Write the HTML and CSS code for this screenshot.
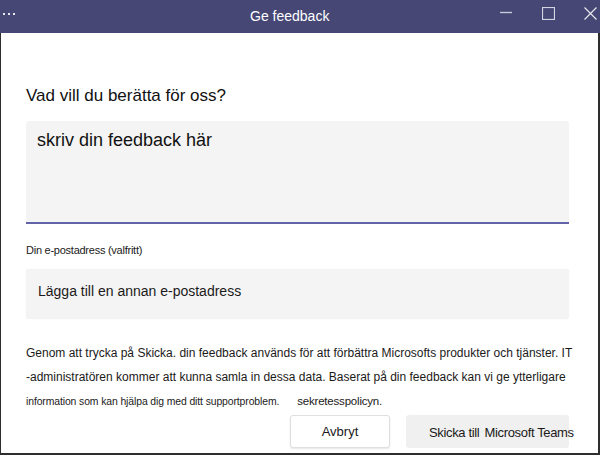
FILE: index.html
```html
<!DOCTYPE html>
<html lang="sv">
<head>
<meta charset="utf-8">
<title>Ge feedback</title>
<link rel="stylesheet" href="styles.css">
</head>
<body>
<div class="window">
  <header class="titlebar">
    <div class="dots"><span></span><span></span><span></span></div>
    <div class="title">Ge feedback</div>
    <div class="controls">
      <svg class="ctl" width="13" height="13" viewBox="0 0 13 13"><line x1="0" y1="5.5" x2="12" y2="5.5" stroke="#c9c9d9" stroke-width="1.4"/></svg>
      <svg class="ctl" width="13" height="13" viewBox="0 0 13 13"><rect x="0.5" y="0.5" width="12" height="12" fill="none" stroke="#d4d4e2" stroke-width="1.2"/></svg>
      <svg class="ctl" width="13" height="13" viewBox="0 0 13 13"><path d="M0.5 0.5 L12.5 12.5 M12.5 0.5 L0.5 12.5" stroke="#e6e6ee" stroke-width="1.2" fill="none"/></svg>
    </div>
  </header>
  <main class="content">
    <h1 class="heading">Vad vill du berätta för oss?</h1>
    <div class="textarea">skriv din feedback här</div>
    <label class="label">Din e-postadress (valfritt)</label>
    <div class="input">Lägga till en annan e-postadress</div>
    <p class="notice">Genom att trycka på Skicka. din feedback används för att förbättra Microsofts produkter och tjänster. IT -administratören kommer att kunna samla in dessa data. Baserat på din feedback kan vi ge ytterligare <span class="small">information som kan hjälpa dig med ditt supportproblem.</span><span class="policy">sekretesspolicyn.</span></p>
    <div class="actions">
      <button class="btn cancel">Avbryt</button>
      <button class="btn send">Skicka till <span class="teams">Microsoft Teams</span></button>
    </div>
  </main>
</div>
</body>
</html>
```

FILE: styles.css
```css
* { box-sizing: border-box; }
html, body { margin: 0; padding: 0; background: #ffffff; }
body { font-family: "Liberation Sans", Arial, sans-serif; color: #1b1a19; }

.window {
  width: 600px;
  height: 455px;
  display: flex;
  flex-direction: column;
  overflow: hidden;
}

.titlebar {
  height: 33px;
  flex: none;
  background: #464775;
  display: flex;
  align-items: flex-start;
  color: #ffffff;
}
.dots {
  display: flex;
  gap: 3px;
  padding-left: 3px;
  margin-top: 13px;
}
.dots span {
  width: 2px;
  height: 2px;
  background: #e8e8f0;
}
.title {
  margin-left: 235px;
  margin-top: 8px;
  font-size: 14px;
  line-height: 17px;
  color: #ffffff;
}
.controls {
  margin-left: auto;
  margin-right: 3px;
  margin-top: 7px;
  display: flex;
  gap: 29px;
}
.ctl { display: block; }

.content {
  flex: 1;
  border-left: 1px solid #2e2e2e;
  border-right: 2px solid #2e2e2e;
  border-bottom: 2px solid #2e2e2e;
  padding: 52px 29px 0 25px;
  display: flex;
  flex-direction: column;
}

.heading {
  margin: 0;
  font-size: 17px;
  line-height: 21px;
  font-weight: normal;
  color: #111111;
}
.textarea {
  margin-top: 15px;
  height: 103px;
  background: #f4f4f4;
  border-radius: 3px 3px 0 0;
  border-bottom: 2px solid #6264a7;
  padding: 8px 11px;
  font-size: 18px;
  line-height: 22px;
  color: #111111;
}
.label {
  margin-top: 19px;
  font-size: 11px;
  line-height: 14px;
  letter-spacing: -0.25px;
  color: #1b1a19;
}
.input {
  margin-top: 12px;
  height: 50px;
  background: #f4f4f4;
  border-radius: 3px;
  box-shadow: 0 0 1px rgba(0,0,0,0.08);
  padding: 13px 12px;
  font-size: 14px;
  line-height: 18px;
  color: #1b1a19;
}
.notice {
  margin: 22px 0 0 0;
  font-size: 12px;
  line-height: 24px;
  color: #1b1a19;
  margin-right: -6px;
}
.small {
  font-size: 10.4px;
  letter-spacing: -0.1px;
}
.policy {
  margin-left: 18px;
  font-size: 11.5px;
  letter-spacing: -0.2px;
}

.actions {
  margin-top: 1px;
  display: flex;
  justify-content: flex-end;
  gap: 16px;
}
.btn {
  font-family: "Liberation Sans", Arial, sans-serif;
  font-size: 13px;
  height: 33px;
  border-radius: 3px;
  color: #1b1a19;
  white-space: nowrap;
  padding: 0;
}
.cancel {
  width: 100px;
  background: #ffffff;
  border: 1px solid #e1dfdd;
  box-shadow: 0 1px 2px rgba(0,0,0,0.10);
}
.send {
  width: 163px;
  background: #f0f0f0;
  border: none;
  text-align: left;
  padding-left: 23px;
  padding-top: 2px;
  letter-spacing: -0.35px;
  overflow: visible;
}
.teams { margin-left: 2px; }
```
